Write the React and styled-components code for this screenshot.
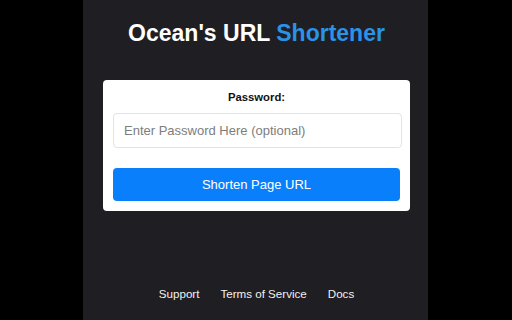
import React from "react";
import styled, { createGlobalStyle } from "styled-components";

const Global = createGlobalStyle`
  html, body {
    margin: 0;
    padding: 0;
    background: #000000;
    font-family: "Liberation Sans", Arial, sans-serif;
  }
`;

const Page = styled.div`
  width: 512px;
  height: 320px;
  display: flex;
`;

const Column = styled.div`
  margin-left: 83px;
  width: 345px;
  height: 320px;
  background: #1f1e23;
  display: flex;
  flex-direction: column;
  align-items: center;
  padding: 20px 18px 0 20px;
  box-sizing: border-box;
`;

const Title = styled.h1`
  margin: 0;
  font-size: 23px;
  font-weight: 700;
  color: #ffffff;
  line-height: 26px;
  text-align: center;
`;

const Accent = styled.span`
  color: #2a93e8;
`;

const Card = styled.div`
  margin-top: 34px;
  width: 307px;
  background: #ffffff;
  border-radius: 4px;
  padding: 10px;
  box-sizing: border-box;
  display: flex;
  flex-direction: column;
  align-items: stretch;
`;

const Label = styled.label`
  font-size: 11.3px;
  font-weight: 700;
  color: #111111;
  text-align: center;
  line-height: 14px;
`;

const Input = styled.input`
  margin-top: 9px;
  height: 35px;
  width: 289px;
  box-sizing: border-box;
  border: 1px solid #e3e3e3;
  border-radius: 4px;
  padding: 0 10px;
  font-family: "Liberation Sans", Arial, sans-serif;
  font-size: 13px;
  color: #333;
  outline: none;
  &::placeholder {
    color: #7d7d7d;
  }
`;

const Button = styled.button`
  margin-top: 20px;
  height: 33px;
  width: 287px;
  border: none;
  border-radius: 4px;
  background: #0a7ffb;
  color: #ffffff;
  font-family: "Liberation Sans", Arial, sans-serif;
  font-size: 13px;
  cursor: pointer;
`;

const Footer = styled.nav`
  margin-top: auto;
  margin-bottom: 20px;
  display: flex;
  gap: 21px;
`;

const FooterLink = styled.a`
  color: #f1f1f1;
  font-size: 11.6px;
  text-decoration: none;
  cursor: pointer;
`;

export default function App() {
  return (
    <>
      <Global />
      <Page>
        <Column>
          <Title>
            Ocean's URL <Accent>Shortener</Accent>
          </Title>
          <Card>
            <Label>Password:</Label>
            <Input type="password" placeholder="Enter Password Here (optional)" />
            <Button>Shorten Page URL</Button>
          </Card>
          <Footer>
            <FooterLink>Support</FooterLink>
            <FooterLink>Terms of Service</FooterLink>
            <FooterLink>Docs</FooterLink>
          </Footer>
        </Column>
      </Page>
    </>
  );
}
